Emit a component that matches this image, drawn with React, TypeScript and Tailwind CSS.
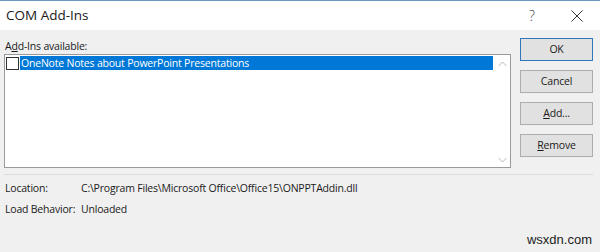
import React from "react";

const font = { fontFamily: '"Open Sans", "Noto Sans", sans-serif' };

function Btn({ children, primary }: { children: React.ReactNode; primary?: boolean }) {
  return (
    <div
      className={
        "h-[23px] w-[73px] flex items-center justify-center text-[10.5px] tracking-[-0.2px] text-[#1a1a1a] bg-[#e1e1e1] border " +
        (primary ? "border-[#2f78c0]" : "border-[#adadad]")
      }
    >
      {children}
    </div>
  );
}

export default function App() {
  return (
    <div className="w-[600px] h-[252px] bg-[#f0f0f0] overflow-hidden flex flex-col" style={font}>
      <div className="h-[30px] bg-white border-t border-[#6d97bb] flex items-center pl-[6px] shrink-0">
        <span className="text-[13.5px] text-[#1a1a1a] leading-none">COM Add-Ins</span>
        <div className="flex-1" />
        <span className="text-[14px] text-[#444] w-[20px] text-center mr-[29px] leading-none font-light">?</span>
        <svg width="12" height="12" viewBox="0 0 12 12" className="mr-[17px]">
          <path d="M0.5 0.5 L11.5 11.5 M11.5 0.5 L0.5 11.5" stroke="#333" strokeWidth="1" />
        </svg>
      </div>
      <div className="flex pl-[4px] pt-[8px]">
        <div className="flex flex-col w-[507px]">
          <div className="text-[10.5px] tracking-[-0.2px] text-[#1a1a1a] leading-[16px] pl-[1px] h-[16px]">
            A<span className="underline">d</span>d-Ins available:
          </div>
          <div className="h-[114px] bg-white border border-[#9a9a9a] flex">
            <div className="flex-1 pt-[1px] pl-[1px]">
              <div className="flex items-center h-[14px]">
                <div className="w-[13px] h-[13px] bg-white border border-[#333] shrink-0" />
                <div className="ml-[1px] w-[473px] h-[14px] bg-[#0078d7] text-white text-[10.5px] tracking-[-0.2px] leading-[14px] pl-[1px]">
                  OneNote Notes about PowerPoint Presentations
                </div>
              </div>
            </div>
            <div className="w-[16px] flex flex-col items-center justify-between pt-[6px] pb-[4px]">
              <svg width="9" height="6" viewBox="0 0 9 6">
                <path d="M0.5 5 L4.5 1 L8.5 5" fill="none" stroke="#b8b8b8" strokeWidth="1" />
              </svg>
              <svg width="9" height="6" viewBox="0 0 9 6">
                <path d="M0.5 1 L4.5 5 L8.5 1" fill="none" stroke="#b8b8b8" strokeWidth="1" />
              </svg>
            </div>
          </div>
        </div>
        <div className="flex flex-col gap-[9px] ml-[9px]">
          <Btn primary>OK</Btn>
          <Btn>Cancel</Btn>
          <Btn>
            <span>
              <span className="underline">A</span>dd...
            </span>
          </Btn>
          <Btn>
            <span>
              <span className="underline">R</span>emove
            </span>
          </Btn>
        </div>
      </div>
      <div className="ml-[4px] mr-[7px] mt-[6px] h-px bg-[#dcdcdc]" />
      <div className="grid grid-cols-[76px_1fr] pl-[5px] pt-[5px] gap-y-[5px] text-[10.5px] tracking-[-0.2px] text-[#1a1a1a] leading-[16px] whitespace-nowrap">
        <div>Location:</div>
        <div>C:\Program Files\Microsoft Office\Office15\ONPPTAddin.dll</div>
        <div>Load Behavior:</div>
        <div>Unloaded</div>
      </div>
      <div className="flex-1" />
      <div className="flex justify-end pr-[8px] pb-[3px]">
        <span className="text-[13px] text-[#222]" style={{ fontFamily: '"Liberation Sans", Arial, sans-serif' }}>
          wsxdn.com
        </span>
      </div>
    </div>
  );
}
